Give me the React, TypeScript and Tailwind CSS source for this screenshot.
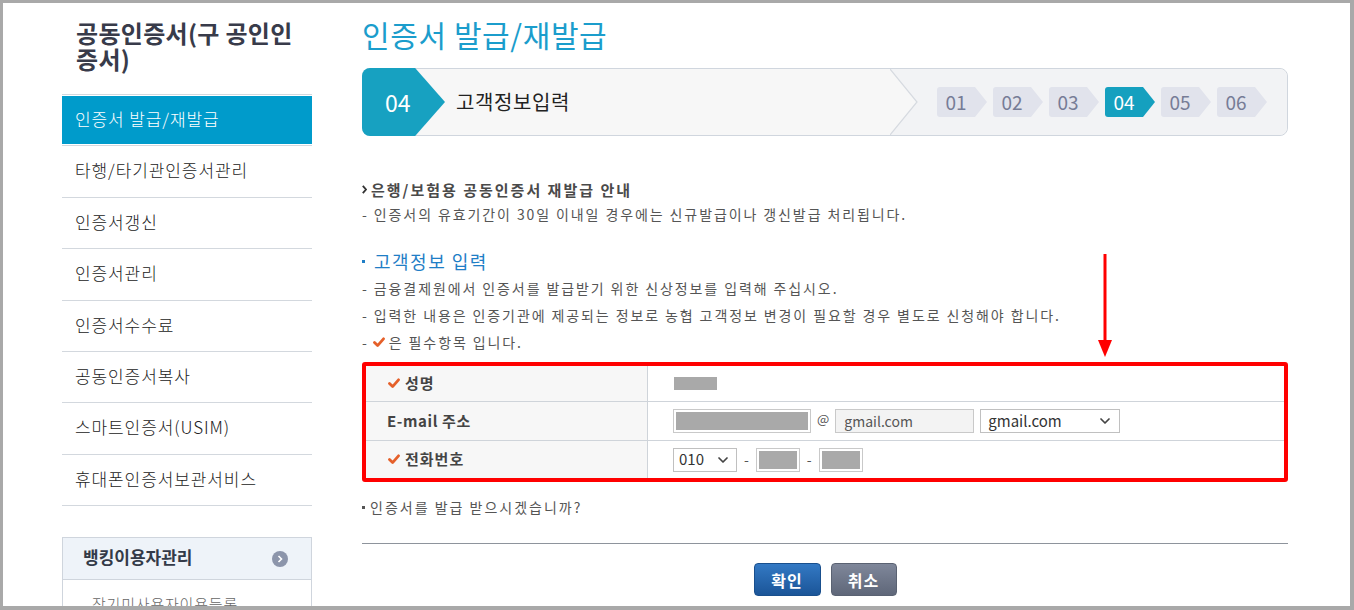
import { ChevronDown } from "lucide-react";

const MENU = [
  "인증서 발급/재발급",
  "타행/타기관인증서관리",
  "인증서갱신",
  "인증서관리",
  "인증서수수료",
  "공동인증서복사",
  "스마트인증서(USIM)",
  "휴대폰인증서보관서비스",
];

const STEPS = ["01", "02", "03", "04", "05", "06"];

function Check() {
  return (
    <svg width="12" height="11" viewBox="0 0 12 11" className="shrink-0">
      <path d="M1.5 5.5 L4.6 8.6 L10.5 1.8" fill="none" stroke="#e5602a" strokeWidth="2.8" strokeLinecap="round" strokeLinejoin="round" />
    </svg>
  );
}

function Redacted({ w }: { w: string }) {
  return (
    <div className={`h-[24px] ${w} border border-[#c9c9c9] bg-white p-[2px]`}>
      <div className="h-full w-full bg-[#a9a9a9]" />
    </div>
  );
}

function Sidebar() {
  return (
    <aside className="ml-[59px] w-[250px] shrink-0 pt-[17px]">
      <h2 className="w-[240px] pl-[14px] text-[24px] font-bold leading-[26px] tracking-[0.3px] text-[#383b4a]">
        공동인증서(구 공인인증서)
      </h2>

      <ul className="mt-[22px] border-t border-[#d3d8de]">
        {MENU.map((m, i) => (
          <li key={m} className="h-[51.4px] border-b border-[#d3d8de] py-px">
            <div
              className={`flex h-full items-center pb-[3px] pl-[13px] text-[17px] font-light tracking-[0.9px] ${
                i === 0 ? "bg-[#009bcb] text-white" : "text-[#222]"
              }`}
            >
              {m}
            </div>
          </li>
        ))}
      </ul>

      <div className="mt-[31px] border border-[#cfd5dd]">
        <div className="flex h-[42px] items-center justify-between border-b border-[#cfd5dd] bg-[#eef3f9] pl-[20px] pr-[23px]">
          <span className="pb-[3px] text-[17px] font-bold text-[#333a48]">뱅킹이용자관리</span>
          <span className="flex h-[16px] w-[16px] items-center justify-center rounded-full bg-[#8c95ab]">
            <svg width="6" height="8" viewBox="0 0 6 8">
              <path d="M1.5 1 L4.5 4 L1.5 7" fill="none" stroke="white" strokeWidth="1.6" />
            </svg>
          </span>
        </div>
        <div className="h-[60px] pl-[29px] pt-[14px] text-[15px] font-light leading-[20px] tracking-[0.8px] text-[#666]">
          장기미사용자이용등록
        </div>
      </div>
    </aside>
  );
}

function StepBar() {
  return (
    <div className="mt-[14px] flex h-[68px] rounded-[8px] border border-[#d0d6de] bg-[#f7f7f7]">
      <div className="-my-px -ml-px flex h-[68px] w-[83px] shrink-0 items-center rounded-l-[8px] bg-[#17a1c1] pl-[23px] text-[23px] text-white [clip-path:polygon(0_0,64%_0,100%_50%,64%_100%,0_100%)]">
        04
      </div>
      <div className="flex flex-1 items-center pl-[11px] text-[20px] tracking-[0.6px] text-[#222]">고객정보입력</div>
      <svg width="28" height="66" viewBox="0 0 28 66" className="shrink-0">
        <polygon points="0,0 28,0 28,66 0,66 27,33" fill="#f2f3f5" />
        <polyline points="0,0 27,33 0,66" fill="none" stroke="#d6dae0" strokeWidth="1.2" />
      </svg>
      <div className="flex items-center gap-[6px] rounded-r-[8px] bg-[#f2f3f5] pl-[19px] pr-[20px]">
        {STEPS.map((s) => (
          <div
            key={s}
            className={`flex h-[30px] w-[50px] items-center justify-center rounded-l-[3px] pr-[12px] text-[19px] [clip-path:polygon(0_0,76%_0,100%_50%,76%_100%,0_100%)] ${
              s === "04" ? "bg-[#15a0bf] text-white" : "bg-[#e1e3ec] text-[#767c96]"
            }`}
          >
            {s}
          </div>
        ))}
      </div>
    </div>
  );
}

function FormTable() {
  return (
    <div className="mt-[6px] rounded-[3px] border-[4px] border-[#ff0000] text-[15px]">
      <div className="flex h-[36px] border-b border-[#cfd4da]">
        <div className="flex w-[282px] items-center gap-[5px] border-r border-[#cfd4da] bg-[#f7f7f7] pl-[22px] font-bold tracking-[1px] text-[#444]">
          <Check />
          성명
        </div>
        <div className="flex flex-1 items-center pl-[26px]">
          <div className="h-[13px] w-[43px] bg-[#a9a9a9]" />
        </div>
      </div>

      <div className="flex h-[39px] border-b border-[#cfd4da]">
        <div className="flex w-[282px] items-center border-r border-[#cfd4da] bg-[#f7f7f7] pl-[21px] font-bold tracking-[0.6px] text-[#444]">
          E-mail 주소
        </div>
        <div className="flex flex-1 items-center pl-[25px]">
          <Redacted w="w-[138px]" />
          <span className="mx-[6px] -mt-[5px] text-[13px] text-[#555]">@</span>
          <div className="flex h-[24px] w-[139px] items-center border border-[#c9c9c9] bg-[#f3f3f3] pl-[8px] text-[14px] text-[#555]">
            gmail.com
          </div>
          <div className="ml-[6px] flex h-[24px] w-[140px] items-center justify-between border border-[#c0c0c0] bg-white pl-[7px] pr-[6px] text-[15px] text-[#333]">
            gmail.com
            <ChevronDown size={16} strokeWidth={2.6} color="#444" />
          </div>
        </div>
      </div>

      <div className="flex h-[37px]">
        <div className="flex w-[282px] items-center gap-[5px] border-r border-[#cfd4da] bg-[#f7f7f7] pl-[22px] font-bold tracking-[1px] text-[#444]">
          <Check />
          전화번호
        </div>
        <div className="flex flex-1 items-center pl-[25px]">
          <div className="flex h-[24px] w-[64px] items-center justify-between border border-[#c0c0c0] bg-white pl-[5px] pr-[5px] text-[15px] text-[#333]">
            010
            <ChevronDown size={16} strokeWidth={2.6} color="#444" />
          </div>
          <span className="mx-[7px] text-[14px] text-[#555]">-</span>
          <Redacted w="w-[44px]" />
          <span className="mx-[7px] text-[14px] text-[#555]">-</span>
          <Redacted w="w-[44px]" />
        </div>
      </div>
    </div>
  );
}

export default function App() {
  return (
    <div className="flex h-[610px] w-[1354px] overflow-hidden border-b-[4px] border-l-[3px] border-r-[4px] border-t-[3px] border-[#a9a9a9] bg-white [font-family:'Noto_Sans_CJK_KR','Noto_Sans',sans-serif]">
      <Sidebar />

      <main className="relative ml-[50px] w-[926px] shrink-0 pt-[11px]">
        <h1 className="text-[30px] leading-[40px] tracking-[0.6px] text-[#1b9dcc]">인증서 발급/재발급</h1>

        <StepBar />

        <div className="mt-[41px] text-[14px] leading-[25px] tracking-[1.9px] text-[#555]">
          <p className="flex items-center gap-[4px] text-[15px] font-bold tracking-[2px] text-[#4a4a4a]">
            <svg width="5" height="9" viewBox="0 0 5 9">
              <path d="M0.8 0.8 L4 4.5 L0.8 8.2" fill="none" stroke="#333" strokeWidth="1.8" />
            </svg>
            은행/보험용 공동인증서 재발급 안내
          </p>
          <p>- 인증서의 유효기간이 30일 이내일 경우에는 신규발급이나 갱신발급 처리됩니다.</p>
        </div>

        <h3 className="mt-[20px] flex items-center gap-[9px] text-[18px] leading-[28px] tracking-[1.5px] text-[#1f7ec6]">
          <span className="h-[3px] w-[3px] bg-[#1f7ec6]" />
          고객정보 입력
        </h3>
        <div className="text-[14px] leading-[27px] tracking-[1.9px] text-[#555]">
          <p>- 금융결제원에서 인증서를 발급받기 위한 신상정보를 입력해 주십시오.</p>
          <p>- 입력한 내용은 인증기관에 제공되는 정보로 농협 고객정보 변경이 필요할 경우 별도로 신청해야 합니다.</p>
          <p className="flex items-center gap-[4px]">
            - <Check /> 은 필수항목 입니다.
          </p>
        </div>

        <FormTable />

        <p className="mt-[15px] flex items-center gap-[5px] text-[14px] leading-[20px] tracking-[2px] text-[#555]">
          <span className="h-[3px] w-[3px] bg-[#555]" />
          인증서를 발급 받으시겠습니까?
        </p>

        <hr className="mt-[26px] border-t border-[#8e949c]" />

        <div className="mt-[19px] flex justify-center gap-[10px]">
          <button className="h-[33px] w-[67px] rounded-[4px] border border-[#194f8d] bg-gradient-to-b from-[#3379c4] to-[#1b5598] text-[16px] font-bold tracking-[1px] text-white">
            확인
          </button>
          <button className="h-[33px] w-[66px] rounded-[4px] border border-[#5a6272] bg-gradient-to-b from-[#7f879a] to-[#5f6779] text-[16px] font-bold tracking-[1px] text-white">
            취소
          </button>
        </div>

        {/* annotation arrow */}
        <svg width="14" height="103" viewBox="0 0 14 103" className="absolute left-[736px] top-[251px]">
          <line x1="7" y1="0" x2="7" y2="90" stroke="#ff0000" strokeWidth="3" />
          <polygon points="0,86 14,86 7,103" fill="#ff0000" />
        </svg>
      </main>
    </div>
  );
}
